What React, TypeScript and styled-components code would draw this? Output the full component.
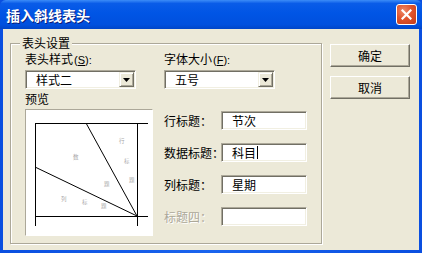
import { FunctionComponent } from 'react'
import styled, { createGlobalStyle } from 'styled-components'

const GlobalStyle = createGlobalStyle`
    html, body {
        margin: 0;
        padding: 0;
        background: #0055ea;
    }
    * {
        box-sizing: border-box;
    }
`

const cjk = `"Noto Sans CJK SC", "Liberation Sans", sans-serif`

const Window = styled.div`
    display: flex;
    flex-direction: column;
    width: 422px;
    height: 253px;
    background: linear-gradient(90deg, #0a4fe0 0%, #1a64ee 50%, #0a4fe0 100%);
    font-family: ${cjk};
    font-size: 12px;
    color: #000;
`

const TitleBar = styled.div`
    display: flex;
    align-items: center;
    justify-content: space-between;
    height: 29px;
    padding: 0 5px 0 6px;
    background: linear-gradient(180deg, #3c8cf8 0%, #0a5ce8 12%, #0055e5 45%, #0050de 85%, #0045c8 100%);
    border-radius: 6px 6px 0 0;
`

const Title = styled.div`
    color: #fff;
    font-size: 14px;
    font-weight: bold;
    line-height: 16px;
    text-shadow: 1px 1px 0 #0a1e7a;
`

const CloseButton = styled.div`
    display: flex;
    align-items: center;
    justify-content: center;
    width: 21px;
    height: 21px;
    border: 1px solid #fff;
    border-radius: 3px;
    background: radial-gradient(circle at 35% 30%, #ee8a6a 0%, #e0542d 45%, #c33a17 100%);
`

const Body = styled.div`
    display: flex;
    align-items: flex-start;
    flex: 1;
    margin: 0 3px 3px;
    padding: 0 9px 0 7px;
    background: #ece9d8;
`

const GroupBox = styled.div`
    position: relative;
    width: 312px;
    height: 201px;
    margin-top: 14px;
    padding: 8px 0 0 14px;
    border: 1px solid #aca899;
    box-shadow: inset 1px 1px 0 #fff, 1px 1px 0 #fff;
`

const Legend = styled.span`
    position: absolute;
    top: -8px;
    left: 9px;
    padding: 0 2px;
    background: #ece9d8;
    line-height: 14px;
`

const Columns = styled.div`
    display: flex;
    gap: 11px;
`

const Column = styled.div<{ $width: number }>`
    display: flex;
    flex-direction: column;
    width: ${({ $width }) => $width}px;
`

const Label = styled.div<{ $disabled?: boolean }>`
    line-height: 14px;
    white-space: nowrap;
    color: ${({ $disabled }) => ($disabled ? '#aca899' : '#000')};
    text-shadow: ${({ $disabled }) => ($disabled ? '1px 1px 0 #fff' : 'none')};
`

const Accel = styled.span`
    font-family: "Liberation Sans", sans-serif;
    font-size: 11px;
    margin-left: 1px;
    u {
        text-decoration: underline;
    }
`

const Select = styled.div`
    display: flex;
    align-items: center;
    justify-content: space-between;
    width: 111px;
    height: 19px;
    margin-top: 3px;
    padding: 0 1px 0 10px;
    background: #fff;
    border: 1px solid;
    border-color: #aca899 #fff #fff #aca899;
    box-shadow: inset 1px 1px 0 #716f64, inset -1px -1px 0 #f1efe2;
    line-height: 14px;
`

const ArrowButton = styled.div`
    display: flex;
    align-items: center;
    justify-content: center;
    width: 15px;
    height: 15px;
    background: #ece9d8;
    border: 1px solid;
    border-color: #f1efe2 #716f64 #716f64 #f1efe2;
    box-shadow: inset 1px 1px 0 #fff, inset -1px -1px 0 #aca899;
`

const Preview = styled.div`
    width: 128px;
    height: 127px;
    margin-top: 3px;
    background: #fff;
    border: 1px solid;
    border-color: #aca899 #fff #fff #aca899;
`

const FieldList = styled.div`
    display: flex;
    flex-direction: column;
    gap: 13px;
    margin-top: 22px;
`

const FieldRow = styled.div`
    display: flex;
    align-items: center;
    height: 19px;
`

const FieldLabel = styled(Label)`
    width: 57px;
`

const TextInput = styled.div`
    display: flex;
    align-items: center;
    width: 86px;
    height: 19px;
    padding-left: 10px;
    background: #fff;
    border: 1px solid;
    border-color: #aca899 #fff #fff #aca899;
    box-shadow: inset 1px 1px 0 #716f64, inset -1px -1px 0 #f1efe2;
    line-height: 14px;
`

const Caret = styled.span`
    display: inline-block;
    width: 1px;
    height: 13px;
    margin-left: 1px;
    background: #000;
`

const ButtonColumn = styled.div`
    display: flex;
    flex-direction: column;
    gap: 9px;
    margin: 15px 0 0 8px;
`

const Button = styled.div`
    display: flex;
    align-items: center;
    justify-content: center;
    width: 80px;
    height: 23px;
    background: #ece9d8;
    border: 1px solid;
    border-color: #fff #716f64 #716f64 #fff;
    box-shadow: inset -1px -1px 0 #aca899;
    line-height: 14px;
`

const DownArrow = () => (
    <svg width="7" height="4" viewBox="0 0 7 4">
        <path d="M0 0h7L3.5 4z" fill="#000" />
    </svg>
)

const CloseIcon = () => (
    <svg width="11" height="11" viewBox="0 0 11 11">
        <path d="M1.5 1.5l8 8M9.5 1.5l-8 8" stroke="#fff" strokeWidth="2.2" strokeLinecap="square" />
    </svg>
)

// small slanted-header drawing inside the preview box
const previewText: [string, number, number][] = [
    ['行', 93, 33], ['标', 98, 53], ['题', 103, 72],
    ['数', 47, 49], ['题', 78, 76],
    ['列', 35, 91], ['标', 56, 94], ['题', 75, 98],
]

const PreviewDrawing = () => (
    <svg width="126" height="125" viewBox="0 0 126 125" shapeRendering="crispEdges">
        <g stroke="#000" strokeWidth="1">
            <path d="M9 13.5H122M9 106.5H122M9.5 13V116M111.5 13V116" />
        </g>
        <g stroke="#000" strokeWidth="1" shapeRendering="auto">
            <path d="M111 106L60 13M111 106L9 57" />
        </g>
        {previewText.map(([c, x, y], i) => (
            <text key={i} x={x} y={y} fontSize="5.5" fill="#a8a8a8" fontFamily={cjk}>
                {c}
            </text>
        ))}
    </svg>
)

const App: FunctionComponent = () => {
    return (
        <>
            <GlobalStyle />
            <Window>
                <TitleBar>
                    <Title>插入斜线表头</Title>
                    <CloseButton><CloseIcon /></CloseButton>
                </TitleBar>
                <Body>
                    <GroupBox>
                        <Legend>表头设置</Legend>
                        <Columns>
                            <Column $width={128}>
                                <Label>表头样式<Accel>(<u>S</u>):</Accel></Label>
                                <Select>
                                    样式二
                                    <ArrowButton><DownArrow /></ArrowButton>
                                </Select>
                                <Label style={{ marginTop: 3 }}>预览</Label>
                                <Preview><PreviewDrawing /></Preview>
                            </Column>
                            <Column $width={143}>
                                <Label>字体大小<Accel>(<u>F</u>):</Accel></Label>
                                <Select>
                                    五号
                                    <ArrowButton><DownArrow /></ArrowButton>
                                </Select>
                                <FieldList>
                                    <FieldRow>
                                        <FieldLabel>行标题：</FieldLabel>
                                        <TextInput>节次</TextInput>
                                    </FieldRow>
                                    <FieldRow>
                                        <FieldLabel>数据标题：</FieldLabel>
                                        <TextInput>科目<Caret /></TextInput>
                                    </FieldRow>
                                    <FieldRow>
                                        <FieldLabel>列标题：</FieldLabel>
                                        <TextInput>星期</TextInput>
                                    </FieldRow>
                                    <FieldRow>
                                        <FieldLabel $disabled>标题四：</FieldLabel>
                                        <TextInput />
                                    </FieldRow>
                                </FieldList>
                            </Column>
                        </Columns>
                    </GroupBox>
                    <ButtonColumn>
                        <Button>确定</Button>
                        <Button>取消</Button>
                    </ButtonColumn>
                </Body>
            </Window>
        </>
    )
}

export default App
